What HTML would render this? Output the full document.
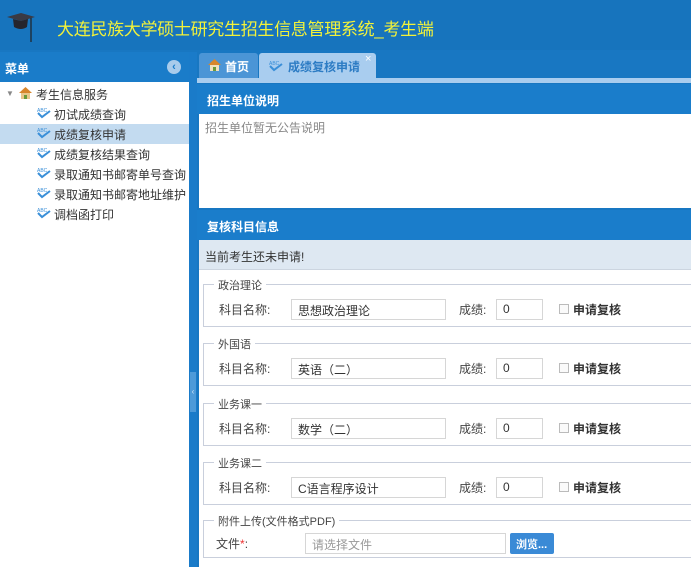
<!DOCTYPE html>
<html><head><meta charset="utf-8"><style>
*{margin:0;padding:0;box-sizing:border-box}
body{width:691px;height:567px;overflow:hidden;background:#1877c2;font-family:"Liberation Sans","Noto Sans CJK SC",sans-serif;font-size:12px;color:#333;position:relative}
.abs{position:absolute}
.hdr{left:0;top:0;width:691px;height:50px;background:#1774bd}
.title{left:57px;top:15px;font-size:17px;letter-spacing:-0.3px;color:#f2f23a;white-space:nowrap}
.side{left:0;top:52px;width:189px;height:515px;background:#fff}
.sideh{left:0;top:52px;width:189px;height:30px;background:#1a7cc9;color:#fff;font-weight:bold;font-size:12px;padding:8px 0 0 5px}
.item{position:absolute;left:54px;font-size:12px;color:#333;white-space:nowrap}
.ico{position:absolute;left:-18px;top:1px}
.split{left:189px;top:52px;width:8px;height:515px;background:#1a7bc9}
.tabbar{left:197px;top:50px;width:494px;height:28px;background:#1877c2}
.tab1{left:199px;top:53px;width:59px;height:25px;background:#4b95d6;color:#fff;font-weight:bold;padding:5px 0 0 26px;border-radius:3px 3px 0 0}
.tab2{left:259px;top:53px;width:117px;height:27px;background:#a9cdef;color:#2d7cc4;font-weight:bold;padding:5px 0 0 29px;border-radius:3px 3px 0 0}
.strip{left:197px;top:78px;width:494px;height:5px;background:#a9cdef}
.ph{left:197px;width:494px;height:30px;background:#1a7dcb;color:#fff;font-weight:bold;padding:8px 0 0 10px}
.white{left:199px;background:#fff}
.fs{position:absolute;left:203px;width:490px;border:1px solid #c9cfdc;border-right:none}
.lg{position:absolute;left:10px;top:-8px;background:#fff;padding:0 4px;color:#444;font-size:11px}
.lab{position:absolute;top:16px;left:15px;color:#444}
.inp{position:absolute;top:14px;left:87px;width:155px;height:21px;border:1px solid #d6d6d6;padding:2px 6px;color:#333}
.sl{position:absolute;top:16px;left:255px;color:#444}
.si{position:absolute;top:14px;left:292px;width:47px;height:21px;border:1px solid #d6d6d6;padding:2px 6px}
.cb{position:absolute;top:19px;left:355px;width:10px;height:10px;border:1px solid #bbb;background:#fafafa}
.ck{position:absolute;top:16px;left:369px;font-weight:bold;color:#333}
</style></head><body>
<div class="abs hdr"></div>
<svg class="abs" style="left:5px;top:12px" width="32" height="32" viewBox="0 0 32 32"><polygon points="2,5 16,1 30,5 16,9" fill="#3a3a44"/><path d="M8,7 L9,15 Q16,19 22,15 L23,7 L16,9 Z" fill="#25252d"/><line x1="26" y1="6" x2="26" y2="30" stroke="#222" stroke-width="1.2"/></svg>
<div class="abs title">大连民族大学硕士研究生招生信息管理系统_考生端</div>
<div class="abs side"></div>
<div class="abs sideh">菜单</div>
<div class="abs" style="left:167px;top:60px;width:14px;height:14px;border-radius:7px;background:#a8cbeb;color:#1a7cc9;font-size:11px;font-weight:bold;text-align:center;line-height:14px">‹</div>
<div class="abs" style="left:6px;top:89px;color:#888;font-size:8px">▼</div>
<svg class="abs" style="left:18px;top:86px" width="15" height="14" viewBox="0 0 15 14"><polygon points="7.5,1 1,7 14,7" fill="#d7862c"/><rect x="3" y="7" width="9" height="6" fill="#e8c68a"/><rect x="6" y="9" width="3" height="4" fill="#6a9a3a"/></svg>
<div class="abs" style="left:36px;top:86px;white-space:nowrap">考生信息服务</div>
<div class="abs" style="left:0;top:124px;width:189px;height:20px;background:#c3dbf0"></div>
<div class="abs" style="left:0;top:86px">
<div class="item" style="top:20px"><svg class="ico" width="15" height="12" viewBox="0 0 15 12"><text x="1" y="5" font-size="5" fill="#3a8fd8">ABC</text><path d="M2,6 L6,10 L14,4" stroke="#3a8fd8" stroke-width="2" fill="none"/></svg>初试成绩查询</div>
<div class="item" style="top:40px"><svg class="ico" width="15" height="12" viewBox="0 0 15 12"><text x="1" y="5" font-size="5" fill="#3a8fd8">ABC</text><path d="M2,6 L6,10 L14,4" stroke="#3a8fd8" stroke-width="2" fill="none"/></svg>成绩复核申请</div>
<div class="item" style="top:60px"><svg class="ico" width="15" height="12" viewBox="0 0 15 12"><text x="1" y="5" font-size="5" fill="#3a8fd8">ABC</text><path d="M2,6 L6,10 L14,4" stroke="#3a8fd8" stroke-width="2" fill="none"/></svg>成绩复核结果查询</div>
<div class="item" style="top:80px"><svg class="ico" width="15" height="12" viewBox="0 0 15 12"><text x="1" y="5" font-size="5" fill="#3a8fd8">ABC</text><path d="M2,6 L6,10 L14,4" stroke="#3a8fd8" stroke-width="2" fill="none"/></svg>录取通知书邮寄单号查询</div>
<div class="item" style="top:100px"><svg class="ico" width="15" height="12" viewBox="0 0 15 12"><text x="1" y="5" font-size="5" fill="#3a8fd8">ABC</text><path d="M2,6 L6,10 L14,4" stroke="#3a8fd8" stroke-width="2" fill="none"/></svg>录取通知书邮寄地址维护</div>
<div class="item" style="top:120px"><svg class="ico" width="15" height="12" viewBox="0 0 15 12"><text x="1" y="5" font-size="5" fill="#3a8fd8">ABC</text><path d="M2,6 L6,10 L14,4" stroke="#3a8fd8" stroke-width="2" fill="none"/></svg>调档函打印</div>
</div>
<div class="abs split"></div>
<div class="abs" style="left:190px;top:372px;width:6px;height:40px;background:#4d9ad9;color:#cfe3f5;font-size:8px;line-height:40px;text-align:center">‹</div>
<div class="abs tabbar"></div>
<div class="abs tab1">首页</div>
<svg class="abs" style="left:207px;top:58px" width="15" height="14" viewBox="0 0 15 14"><polygon points="7.5,1 1,7 14,7" fill="#d7862c"/><rect x="3" y="7" width="9" height="6" fill="#f0e0c0"/><rect x="6" y="9" width="3" height="4" fill="#6a9a3a"/></svg>
<div class="abs tab2">成绩复核申请</div>
<svg class="abs" style="left:268px;top:60px" width="15" height="12" viewBox="0 0 15 12"><text x="1" y="5" font-size="5" fill="#3a8fd8">ABC</text><path d="M2,6 L6,10 L14,4" stroke="#3a8fd8" stroke-width="2" fill="none"/></svg>
<div class="abs" style="left:365px;top:53px;color:#fff;font-size:11px">×</div>
<div class="abs strip"></div>
<div class="abs ph" style="top:84px">招生单位说明</div>
<div class="abs white" style="top:114px;width:492px;height:94px;color:#888;padding:5px 6px">招生单位暂无公告说明</div>
<div class="abs ph" style="top:210px">复核科目信息</div>
<div class="abs white" style="top:240px;width:492px;height:327px"></div>
<div class="abs" style="left:199px;top:240px;width:492px;height:30px;background:#dee8f2;border-bottom:1px solid #ccd5e0;padding:8px 0 0 6px;color:#333">当前考生还未申请!</div>
<div class="fs" style="top:284px;height:43px"><span class="lg">政治理论</span><span class="lab">科目名称:</span><div class="inp">思想政治理论</div><span class="sl">成绩:</span><div class="si">0</div><div class="cb"></div><span class="ck">申请复核</span></div>
<div class="fs" style="top:343px;height:43px"><span class="lg">外国语</span><span class="lab">科目名称:</span><div class="inp">英语（二）</div><span class="sl">成绩:</span><div class="si">0</div><div class="cb"></div><span class="ck">申请复核</span></div>
<div class="fs" style="top:403px;height:43px"><span class="lg">业务课一</span><span class="lab">科目名称:</span><div class="inp">数学（二）</div><span class="sl">成绩:</span><div class="si">0</div><div class="cb"></div><span class="ck">申请复核</span></div>
<div class="fs" style="top:462px;height:43px"><span class="lg">业务课二</span><span class="lab">科目名称:</span><div class="inp">C语言程序设计</div><span class="sl">成绩:</span><div class="si">0</div><div class="cb"></div><span class="ck">申请复核</span></div>
<div class="fs" style="top:520px;height:38px"><span class="lg">附件上传(文件格式PDF)</span><span class="lab" style="top:14px;left:12px">文件<span style="color:#e33">*</span>:</span><div class="inp" style="top:12px;left:101px;width:201px;color:#999">请选择文件</div><div style="position:absolute;top:12px;left:306px;width:44px;height:21px;background:#3a8ad6;border-radius:2px;color:#fff;font-size:11px;font-weight:bold;padding:3px 0 0 6px">浏览...</div></div>
</body></html>
